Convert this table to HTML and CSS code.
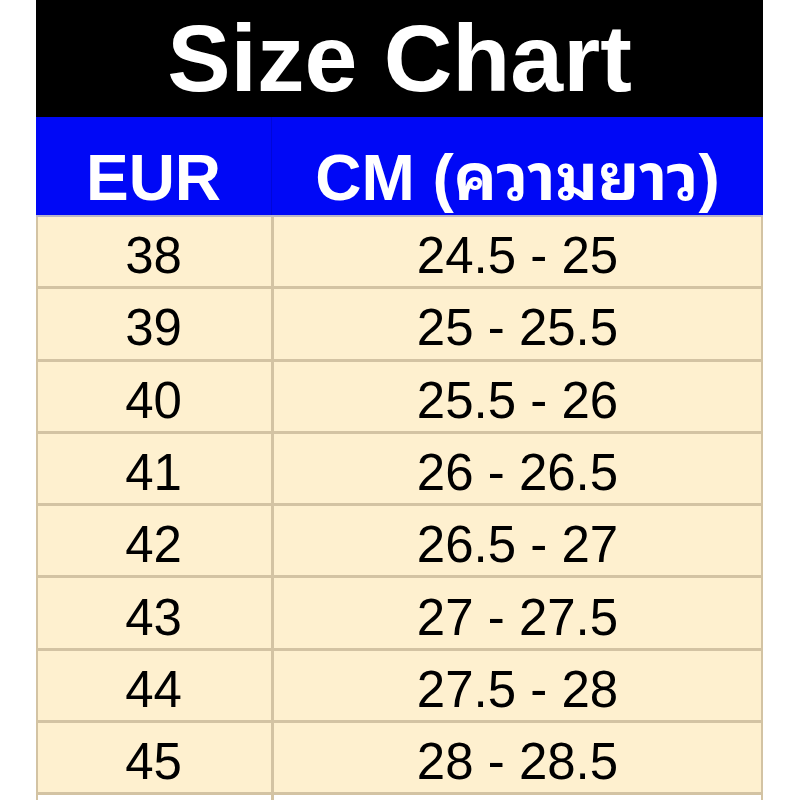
FILE: index.html
```html
<!DOCTYPE html>
<html>
<head>
<meta charset="utf-8">
<link rel="stylesheet" href="styles.css">
</head>
<body>
<div class="chart">
  <div class="title">Size Chart</div>
  <div class="head">
    <div class="hcell c1">EUR</div>
    <div class="hcell c2">CM (ความยาว)</div>
  </div>
  <div class="row"><div class="cell c1">38</div><div class="cell c2">24.5 - 25</div></div>
  <div class="row"><div class="cell c1">39</div><div class="cell c2">25 - 25.5</div></div>
  <div class="row"><div class="cell c1">40</div><div class="cell c2">25.5 - 26</div></div>
  <div class="row"><div class="cell c1">41</div><div class="cell c2">26 - 26.5</div></div>
  <div class="row"><div class="cell c1">42</div><div class="cell c2">26.5 - 27</div></div>
  <div class="row"><div class="cell c1">43</div><div class="cell c2">27 - 27.5</div></div>
  <div class="row"><div class="cell c1">44</div><div class="cell c2">27.5 - 28</div></div>
  <div class="row"><div class="cell c1">45</div><div class="cell c2">28 - 28.5</div></div>
  <div class="row blank"><div class="cell c1"></div><div class="cell c2"></div></div>
</div>
</body>
</html>
```

FILE: styles.css
```css
html, body {
  margin: 0;
  padding: 0;
  background: #ffffff;
  overflow: hidden;
  height: 800px;
}
.chart {
  margin-left: 36px;
  width: 727px;
  font-family: "Liberation Sans", Arial, "Noto Sans Thai Looped", "Loma", "Garuda", "Tlwg Typo", "Noto Sans Thai", "Noto Sans", sans-serif;
}
.title {
  height: 117px;
  background: #000000;
  color: #ffffff;
  font-weight: bold;
  font-size: 95px;
  line-height: 117px;
  text-align: center;
}
.head {
  display: grid;
  grid-template-columns: 236px 1fr;
  grid-template-rows: 98px;
  background: #0008f6;
  border-bottom: 2px solid #b8b4c8;
  box-sizing: border-box;
  height: 100px;
  overflow: hidden;
}
.hcell {
  color: #ffffff;
  font-weight: bold;
  font-size: 64px;
  line-height: 74px;
  height: 98px;
  padding-top: 24px;
  box-sizing: border-box;
  text-align: center;
  white-space: nowrap;
}
.hcell.c1 {
  border-right: 1px solid #0006d8;
}
.row {
  display: grid;
  grid-template-columns: 236px 1fr;
  grid-template-rows: 1fr;
  height: 72.3px;
  box-sizing: border-box;
  background: #fef0cf;
  border-left: 2px solid #d3c3a3;
  border-right: 2px solid #d3c3a3;
  border-bottom: 3px solid #d3c3a3;
}
.row.blank {
  background: #ffffff;
  border-bottom: none;
}
.cell {
  display: flex;
  align-items: center;
  justify-content: center;
  font-size: 51px;
  color: #000000;
  padding-top: 8px;
  box-sizing: border-box;
}
.cell.c1 {
  border-right: 3px solid #d3c3a3;
  margin-left: -2px;
}
```
